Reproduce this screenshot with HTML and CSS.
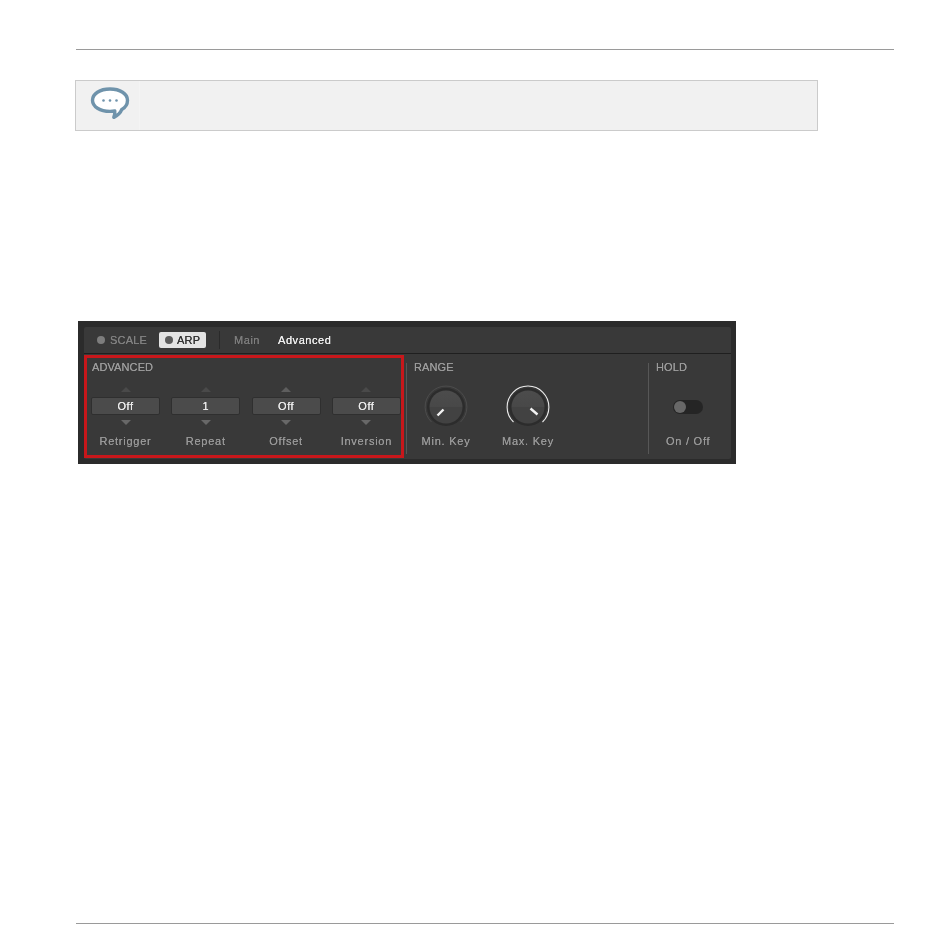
FILE: index.html
```html
<!DOCTYPE html>
<html lang="en">
<head>
<meta charset="utf-8">
<title>Arp Advanced</title>
<link rel="stylesheet" href="styles.css">
</head>
<body>
<div class="page">
  <div class="rule"></div>
  <div class="note">
    <div class="note-icon">
      <svg width="40" height="34" viewBox="0 0 40 34">
        <path d="M20 3C9.800 3 2.500 7.800 2.500 14.200C2.500 20.600 10 25.400 20 25.400C21.600 25.400 23.200 25.300 24.800 25C25 27 24.600 29.200 23.800 31.400C27.700 29.400 30.500 26.800 31.800 23.400C35.500 21.400 37.500 18 37.500 14.200C37.500 7.800 30.200 3 20 3Z" fill="#fff" stroke="#6f93ab" stroke-width="3.400" stroke-linejoin="round"/>
        <circle cx="13.500" cy="14.500" r="1.300" fill="#6f93ab"/>
        <circle cx="20" cy="14.500" r="1.300" fill="#6f93ab"/>
        <circle cx="26.500" cy="14.500" r="1.300" fill="#6f93ab"/>
      </svg>
    </div>
  </div>
  <div class="panel">
    <div class="inner">
      <div class="tabs">
        <span class="mode"><i class="dot"></i><span class="mode-text">SCALE</span></span>
        <span class="mode mode-on"><i class="dot"></i><span class="mode-text">ARP</span></span>
        <span class="sep"></span>
        <span class="tab">Main</span>
        <span class="tab tab-on">Advanced</span>
      </div>
      <div class="body">
        <section class="advanced">
          <h3>ADVANCED</h3>
          <div class="steppers">
            <div class="stepper"><i class="up up-dim"></i><b class="val">Off</b><i class="down"></i><span class="lbl">Retrigger</span></div>
            <div class="stepper"><i class="up up-dim"></i><b class="val">1</b><i class="down"></i><span class="lbl">Repeat</span></div>
            <div class="stepper"><i class="up"></i><b class="val">Off</b><i class="down"></i><span class="lbl">Offset</span></div>
            <div class="stepper"><i class="up up-dim"></i><b class="val">Off</b><i class="down"></i><span class="lbl">Inversion</span></div>
          </div>
        </section>
        <section class="range">
          <h3>RANGE</h3>
          <div class="knobs">
            <div class="knob-col">
              <svg class="knob" width="46" height="46" viewBox="0 0 46 46">
                <defs>
                  <linearGradient id="cap" x1="0" y1="0" x2="0" y2="1">
                    <stop offset="0" stop-color="#4c4c4c"/><stop offset="0.5" stop-color="#484848"/>
                    <stop offset="0.5" stop-color="#424242"/><stop offset="1" stop-color="#424242"/>
                  </linearGradient>
                </defs>
                <path d="M8.500 38A20.900 20.900 0 1 1 37.500 38" fill="none" stroke="#4c4c4c" stroke-width="1"/>
                <circle cx="23" cy="23" r="19" fill="#2c2c2c"/>
                <circle cx="23" cy="23" r="16.500" fill="url(#cap)"/>
                <path d="M14.500 31.500L20.500 25.500" stroke="#f2f2f2" stroke-width="2.400"/>
              </svg>
              <span class="lbl">Min. Key</span>
            </div>
            <div class="knob-col">
              <svg class="knob" width="46" height="46" viewBox="0 0 46 46">
                <path d="M8.500 38A20.900 20.900 0 1 1 37.500 38" fill="none" stroke="#ececec" stroke-width="1.100"/>
                <circle cx="23" cy="23" r="19" fill="#2c2c2c"/>
                <circle cx="23" cy="23" r="16.500" fill="url(#cap)"/>
                <path d="M25.500 24.500L32.500 30.500" stroke="#f2f2f2" stroke-width="2.400"/>
              </svg>
              <span class="lbl">Max. Key</span>
            </div>
          </div>
        </section>
        <section class="hold">
          <h3>HOLD</h3>
          <div class="toggle"><i class="thumb"></i></div>
          <span class="lbl">On / Off</span>
        </section>
      </div>
    </div>
  </div>
  <div class="spacer"></div>
  <div class="rule"></div>
</div>
</body>
</html>
```
FILE: styles.css
```css
* { box-sizing: border-box; }
html, body { margin: 0; padding: 0; background: #fff; }
body { font-family: "Liberation Sans", Arial, sans-serif; }
.page { width: 950px; height: 951px; padding: 49px 56px 0 75px; display: flex; flex-direction: column; }
.rule { height: 1px; margin-left: 1px; background: #9a9a9a; flex: none; }
.note { width: 743px; height: 51px; margin-top: 30px; border: 1px solid #cbcbcb; background: #f1f1f1; flex: none; display: flex; }
.note-icon { width: 64px; height: 49px; border-right: 1px solid #f4f4f4; padding: 4.500px 0 0 14px; }
.note-icon svg { display: block; }
.panel { width: 658px; height: 143px; margin: 190px 0 0 3px; background: #2b2b2b; padding: 6px 5px 5px 6px; flex: none; }
.inner { height: 132px; background: #393939; border-radius: 2px; color: #a6a6a6; font-size: 11px; letter-spacing: .55px; will-change: transform; text-shadow: 0 0 .4px currentColor; }
.tabs { height: 27px; border-bottom: 1px solid #1f1f1f; display: flex; align-items: center; padding: 0 0 0 13px; }
.mode { display: flex; align-items: center; color: #828282; width: 62px; height: 16px; letter-spacing: .2px; }
.dot { width: 8px; height: 8px; border-radius: 50%; background: #7d7d7d; margin-right: 5px; }
.mode-on { width: 47px; padding-left: 6px; background: #e4e4e4; border-radius: 2px; color: #333; }
.mode-on .dot { background: #5c5c5c; margin-right: 4px; }
.sep { width: 1px; height: 18px; background: #2a2a2a; margin: 0 14px 0 13px; }
.tab { color: #7e7e7e; margin-right: 18px; }
.tab-on { color: #f0f0f0; margin: 0; }
.body { display: flex; height: 105px; }
h3 { margin: 0; font-size: 11px; font-weight: normal; line-height: 8px; color: #9c9c9c; letter-spacing: .1px; }
.advanced { width: 320px; height: 103px; margin-top: 1px; border: 3px solid #c8171b; padding: 5px 0 0 5px; }
.steppers { display: flex; margin: 16px 0 0 -1px; gap: 11.300px; }
.stepper { display: flex; flex-direction: column; align-items: center; width: 69px; }
.up { width: 0; height: 0; border: 5px solid transparent; border-top: 0; border-bottom: 5px solid #5e5e5e; }
.up-dim { border-bottom-color: #4a4a4a; }
.down { width: 0; height: 0; border: 5px solid transparent; border-bottom: 0; border-top: 5px solid #686868; margin-top: 5px; }
.val { width: 100%; height: 18px; margin-top: 5px; background: #4b4b4b; border: 1px solid #2f2f2f; border-radius: 2px; color: #ececec; font-weight: normal; text-align: center; line-height: 16px; }
.lbl { display: block; margin-top: 10px; line-height: 13px; letter-spacing: .75px; color: #989898; white-space: nowrap; }
.range { width: 242px; height: 91px; margin: 9px 0 0 2px; border-left: 1px solid #575757; padding: 0 0 0 7px; }
.knobs { display: flex; margin-top: 13px; }
.knob-col { width: 46px; margin-left: 9px; display: flex; flex-direction: column; align-items: center; }
.knob-col + .knob-col { margin-left: 36px; }
.knob { display: block; }
.knob-col .lbl { margin-top: 5px; }
.hold { flex: 1; height: 91px; margin-top: 9px; border-left: 1px solid #575757; padding-left: 7px; display: flex; flex-direction: column; }
.toggle { width: 30px; height: 14px; margin: 29px 0 0 17px; border-radius: 7px; background: #252525; display: flex; align-items: center; padding-left: 1px; }
.thumb { width: 12px; height: 12px; border-radius: 50%; background: #686868; }
.hold .lbl { margin: 21px 0 0 10px; }
.spacer { height: 459px; flex: none; }
```
